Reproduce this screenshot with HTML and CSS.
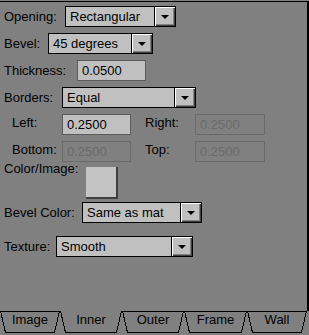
FILE: index.html
```html
<!DOCTYPE html>
<html>
<head>
  <title>Inner Mat</title>
  <link rel="stylesheet" href="styles.css">
</head>
<body>
  <div class="panel">
    <div class="row">
      <span class="lbl lbl-opening">Opening:</span>
      <div class="select select-opening">
        <span class="select-value">Rectangular</span>
        <span class="select-btn"><i class="arrow"></i></span>
      </div>
    </div>
    <div class="row">
      <span class="lbl lbl-bevel">Bevel:</span>
      <div class="select select-bevel">
        <span class="select-value">45 degrees</span>
        <span class="select-btn"><i class="arrow"></i></span>
      </div>
    </div>
    <div class="row">
      <span class="lbl lbl-thickness">Thickness:</span>
      <input type="text" class="field field-thickness" value="0.0500">
    </div>
    <div class="row">
      <span class="lbl lbl-borders">Borders:</span>
      <div class="select select-borders">
        <span class="select-value">Equal</span>
        <span class="select-btn"><i class="arrow"></i></span>
      </div>
    </div>
    <div class="row sub">
      <span class="lbl lbl-side">Left:</span>
      <input type="text" class="field field-side" value="0.2500">
      <span class="lbl lbl-side lbl-right">Right:</span>
      <input type="text" class="field field-side2" value="0.2500" disabled>
    </div>
    <div class="row sub">
      <span class="lbl lbl-side">Bottom:</span>
      <input type="text" class="field field-side" value="0.2500" disabled>
      <span class="lbl lbl-side lbl-right">Top:</span>
      <input type="text" class="field field-side2" value="0.2500" disabled>
    </div>
    <div class="row row-color">
      <span class="lbl lbl-color">Color/Image:</span>
      <button class="swatch" aria-label="Pick color or image"></button>
    </div>
    <div class="row row-bevelcolor">
      <span class="lbl lbl-bevelcolor">Bevel Color:</span>
      <div class="select select-bevelcolor">
        <span class="select-value">Same as mat</span>
        <span class="select-btn"><i class="arrow"></i></span>
      </div>
    </div>
    <div class="row">
      <span class="lbl lbl-texture">Texture:</span>
      <div class="select select-texture">
        <span class="select-value">Smooth</span>
        <span class="select-btn"><i class="arrow"></i></span>
      </div>
    </div>
  </div>
  <div class="tabs">
    <div class="tab tab-60">
      <svg class="tab-shape" width="60" height="23" viewBox="0 0 60 23"><path d="M0 0.5H60M0.5 0L5.5 21.5H54.5L59.5 0"/></svg>
      <span class="tab-label">Image</span>
    </div>
    <div class="tab tab-62 active">
      <svg class="tab-shape" width="62" height="23" viewBox="0 0 62 23"><path d="M0.5 0L5.5 21.5H56.5L61.5 0"/></svg>
      <span class="tab-label">Inner</span>
    </div>
    <div class="tab tab-62">
      <svg class="tab-shape" width="62" height="23" viewBox="0 0 62 23"><path d="M0 0.5H62M0.5 0L5.5 21.5H56.5L61.5 0"/></svg>
      <span class="tab-label">Outer</span>
    </div>
    <div class="tab tab-63">
      <svg class="tab-shape" width="63" height="23" viewBox="0 0 63 23"><path d="M0 0.5H63M0.5 0L5.5 21.5H57.5L62.5 0"/></svg>
      <span class="tab-label">Frame</span>
    </div>
    <div class="tab tab-60">
      <svg class="tab-shape" width="60" height="23" viewBox="0 0 60 23"><path d="M0 0.5H60M0.5 0L5.5 21.5H54.5L59.5 0"/></svg>
      <span class="tab-label">Wall</span>
    </div>
  </div>
</body>
</html>
```

FILE: styles.css
```css
body {
  margin: 0;
  width: 309px;
  height: 335px;
  overflow: hidden;
  background-color: #808080;
  color: #000;
  font-family: "Liberation Sans", Arial, sans-serif;
  font-size: 13px;
  line-height: 15px;
}

.panel {
  margin-top: 1px;
  border-top: 1px solid #000;
  border-right: 2px solid #000;
  height: 305px;
  padding-top: 4px;
}

.row {
  display: flex;
  align-items: center;
  height: 21px;
  margin-bottom: 6px;
  padding-left: 4px;
}
.lbl {
  flex: none;
  white-space: nowrap;
}
.lbl-opening { width: 61px; }
.lbl-bevel { width: 44px; }
.lbl-thickness { width: 73px; }
.lbl-borders { width: 58px; }
.lbl-color { width: 82px; margin-top: -6px; }
.lbl-bevelcolor { width: 78px; }
.lbl-texture { width: 52px; }

.row.sub {
  padding-left: 12px;
}
.sub .lbl {
  margin-bottom: 4px;
}
.lbl-side { width: 50px; }
.lbl-right { margin-left: 14px; }

/* fake dropdowns */
.select {
  display: flex;
  height: 21px;
  box-sizing: border-box;
  border: 1px solid #000;
  background: #c0c0c0;
}
.select-opening { width: 111px; }
.select-bevel { width: 105px; }
.select-borders { width: 134px; }
.select-bevelcolor { width: 120px; }
.select-texture { width: 137px; }
.select-value {
  flex: 1;
  padding-left: 4px;
  line-height: 19px;
  white-space: nowrap;
  overflow: hidden;
}
.select-btn {
  width: 20px;
  border-left: 1px solid #000;
  background: #c0c0c0;
  box-shadow: inset 1px 1px 0 #fff, inset -1px -1px 0 #404040, inset -2px -2px 0 #808080;
  display: flex;
  align-items: center;
  justify-content: center;
}
.arrow {
  display: block;
  width: 0;
  height: 0;
  margin-top: 1px;
  border-left: 4px solid transparent;
  border-right: 4px solid transparent;
  border-top: 4px solid #000;
}

.field {
  height: 21px;
  box-sizing: border-box;
  margin: 0;
  padding: 0 0 0 4px;
  border: 1px solid #5a5a5a;
  background: #c0c0c0;
  font-family: inherit;
  font-size: 13px;
  color: #000;
  outline: none;
}
.field:disabled {
  background: #808080;
  border-color: #6a6a6a;
  color: #6a6a6a;
}
.field-thickness { width: 69px; }
.field-side { width: 69px; }
.field-side2 { width: 70px; }

.row-color {
  align-items: flex-start;
  height: 32px;
  margin-top: -1px;
  margin-bottom: 3px;
}
.swatch {
  width: 32px;
  height: 32px;
  padding: 0;
  border: none;
  background: #c4c4c4;
  box-shadow: inset -2px -2px 0 #404040;
}
.row-bevelcolor {
  margin-bottom: 13px;
}

.tabs {
  display: flex;
  height: 23px;
}
.tab {
  position: relative;
  flex: none;
  height: 23px;
  text-align: center;
}
.tab-60 { width: 60px; }
.tab-62 { width: 62px; }
.tab-63 { width: 63px; }
.tab-shape {
  position: absolute;
  left: 0;
  top: 0;
  fill: none;
  stroke: #000;
  stroke-width: 1;
  shape-rendering: crispEdges;
}
.tab-label {
  position: relative;
  display: block;
  line-height: 15px;
  padding-top: 1px;
}
```
